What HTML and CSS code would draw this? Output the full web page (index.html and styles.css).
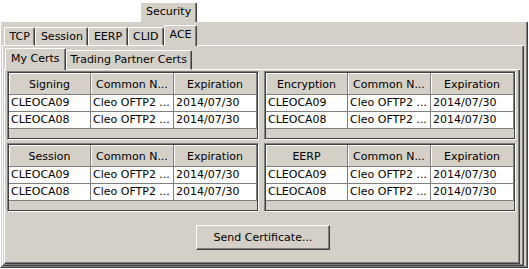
FILE: index.html
```html
<!DOCTYPE html>
<html>
<head>
<meta charset="utf-8">
<link rel="stylesheet" href="styles.css">
</head>
<body>
<div class="tabbed t1">
  <div class="tabrow r1">
    <div class="lead lead1"></div>
    <div class="tab sel">Security</div>
    <div class="fill"></div>
  </div>
  <div class="panel p1">
    <div class="tabbed t2">
      <div class="tabrow r2">
        <div class="lead lead2"></div>
        <div class="tab">TCP</div>
        <div class="tab">Session</div>
        <div class="tab">EERP</div>
        <div class="tab">CLID</div>
        <div class="tab sel">ACE</div>
        <div class="fill"></div>
      </div>
      <div class="panel p2">
        <div class="tabbed t3">
          <div class="tabrow r3">
            <div class="lead"></div>
            <div class="tab sel">My Certs</div>
            <div class="tab">Trading Partner Certs</div>
            <div class="fill"></div>
          </div>
          <div class="panel p3">
            <div class="groups">
              <div class="group">
                <div class="grid">
                  <div class="hc">Signing</div><div class="hc">Common N...</div><div class="hc">Expiration</div>
                  <div class="c">CLEOCA09</div><div class="c">Cleo OFTP2 ...</div><div class="c">2014/07/30</div>
                  <div class="c">CLEOCA08</div><div class="c">Cleo OFTP2 ...</div><div class="c">2014/07/30</div>
                </div>
              </div>
              <div class="group">
                <div class="grid">
                  <div class="hc">Encryption</div><div class="hc">Common N...</div><div class="hc">Expiration</div>
                  <div class="c">CLEOCA09</div><div class="c">Cleo OFTP2 ...</div><div class="c">2014/07/30</div>
                  <div class="c">CLEOCA08</div><div class="c">Cleo OFTP2 ...</div><div class="c">2014/07/30</div>
                </div>
              </div>
              <div class="group">
                <div class="grid">
                  <div class="hc">Session</div><div class="hc">Common N...</div><div class="hc">Expiration</div>
                  <div class="c">CLEOCA09</div><div class="c">Cleo OFTP2 ...</div><div class="c">2014/07/30</div>
                  <div class="c">CLEOCA08</div><div class="c">Cleo OFTP2 ...</div><div class="c">2014/07/30</div>
                </div>
              </div>
              <div class="group">
                <div class="grid">
                  <div class="hc">EERP</div><div class="hc">Common N...</div><div class="hc">Expiration</div>
                  <div class="c">CLEOCA09</div><div class="c">Cleo OFTP2 ...</div><div class="c">2014/07/30</div>
                  <div class="c">CLEOCA08</div><div class="c">Cleo OFTP2 ...</div><div class="c">2014/07/30</div>
                </div>
              </div>
            </div>
            <div class="btnrow">
              <button class="btn">Send Certificate...</button>
            </div>
          </div>
        </div>
      </div>
    </div>
  </div>
</div>
</body>
</html>
```

FILE: styles.css
```css
* { box-sizing: border-box; }
html, body { margin: 0; padding: 0; }
body {
  background: #ffffff;
  width: 529px;
  height: 269px;
  overflow: hidden;
  font-family: "DejaVu Sans", Verdana, sans-serif;
  font-size: 11px;
  color: #000;
}
.tabbed { display: flex; flex-direction: column; }
.t1 { width: 528px; height: 268px; }
.t2, .t3 { flex: 1; }
.tabrow { display: flex; align-items: flex-end; flex: none; }
.r1 { height: 22px; }
.r2 { height: 21px; }
.r3 { height: 22px; }
.lead { width: 1px; align-self: stretch; border-bottom: 1px solid #fff; }
.lead1 { width: 140px; }
.lead2 { width: 2px; }
.fill { flex: 1; align-self: stretch; border-bottom: 1px solid #fff; }
.tab {
  background: #d4d0c8;
  border-left: 1px solid #fff;
  border-top: 1px solid #fff;
  border-right: 1px solid #404040;
  border-bottom: 1px solid #fff;
  box-shadow: inset -1px 0 #808080;
  border-top-left-radius: 2px;
  border-top-right-radius: 2px;
  padding: 0 4px;
  height: 19px;
  line-height: 17px;
  white-space: nowrap;
}
.r2 .tab { padding: 0 4.5px; }
.r3 .tab { height: 20px; line-height: 18px; }
.tab.sel { height: 21px; border-bottom: none; line-height: 18px; }
.r1 .tab.sel { height: 20px; padding: 0 5px; }
.r3 .tab.sel { height: 22px; line-height: 20px; padding: 0 5px; }
.panel {
  background: #d4d0c8;
  border-left: 1px solid #fff;
  border-right: 1px solid #404040;
  border-bottom: 1px solid #404040;
  box-shadow: inset -1px -1px #808080;
  display: flex;
  flex-direction: column;
  flex: 1;
}
.p1 { padding: 3px 3px 1px 1px; }
.p2 { padding: 2px 3px 1px 1px; }
.p3 { padding: 1px 2px 1px 2px; }
.groups {
  display: grid;
  grid-template-columns: 252px 252px;
  grid-template-rows: 69px 69px;
  column-gap: 5px;
  row-gap: 3px;
}
.group {
  border: 1px solid;
  border-color: #808080 #ffffff #ffffff #808080;
  background: #d4d0c8;
}
.grid {
  border: 1px solid #404040;
  height: 100%;
  display: grid;
  grid-template-columns: 82px 83px 1fr;
  grid-template-rows: 22px 17px 17px 1fr;
  align-content: start;
}
.hc {
  background: #d4d0c8;
  border-right: 1px solid #808080;
  border-bottom: 1px solid #808080;
  box-shadow: inset 1px 1px #fff;
  text-align: center;
  padding-top: 2px;
  line-height: 19px;
  white-space: nowrap;
  overflow: hidden;
}
.c {
  background: #fff;
  border-right: 1px solid #808080;
  border-bottom: 1px solid #808080;
  padding-left: 2px;
  line-height: 16px;
  white-space: nowrap;
  overflow: hidden;
}
.btnrow {
  display: flex;
  justify-content: center;
  padding-top: 13px;
}
.btn {
  width: 134px;
  height: 25px;
  margin-left: 2px;
  background: #d4d0c8;
  border: 1px solid;
  border-color: #fff #404040 #404040 #fff;
  box-shadow: inset -1px -1px #808080;
  font-family: "DejaVu Sans", Verdana, sans-serif;
  font-size: 11px;
  color: #000;
  padding: 0;
}
```
